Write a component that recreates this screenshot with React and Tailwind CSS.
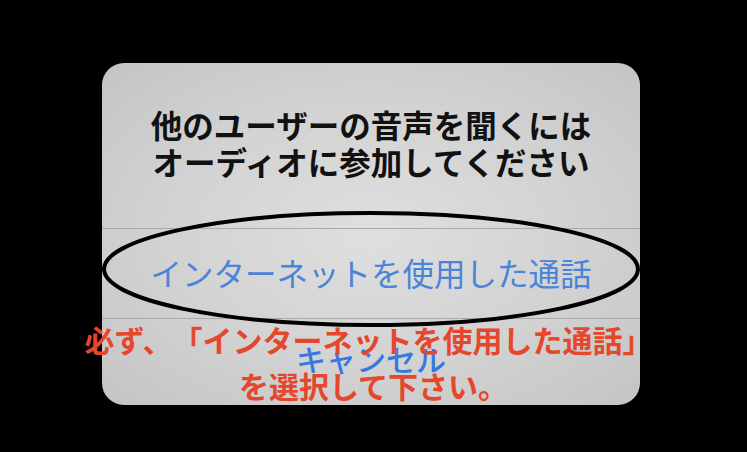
import React from 'react'

const jp = "font-['Noto_Sans_CJK_JP','Noto_Sans',sans-serif]"

const App = () => {
  return (
    <div className={`relative w-[747px] h-[452px] bg-black overflow-hidden [text-spacing-trim:space-all] ${jp}`}>
      <div className="pt-[63px] pl-[102px]">
        <div className="w-[538px] h-[342px] rounded-[22px] overflow-hidden flex flex-col bg-[radial-gradient(ellipse_at_center,#dfdfdf_0%,#d2d2d2_55%,#c4c4c4_100%)]">
          <div className="h-[165px] flex flex-col items-center justify-center pb-[5px] text-[31.5px] leading-[37px] font-bold text-[#111]">
            <div>他のユーザーの音声を聞くには</div>
            <div>オーディオに参加してください</div>
          </div>
          <div className="h-px bg-[#a9a9a9]" />
          <div className="h-[89px] flex items-center justify-center text-[31.5px] text-[#4a84d6] pb-[1px]">
            インターネットを使用した通話
          </div>
          <div className="h-px bg-[#a9a9a9]" />
          <div className="flex-1 flex items-center justify-center text-[30px] font-medium text-[#3777e2] pb-[8px]">
            キャンセル
          </div>
        </div>
      </div>

      <svg className="absolute left-0 top-0" width="747" height="452">
        <ellipse cx="371" cy="269" rx="267" ry="56" fill="none" stroke="#000" strokeWidth="4" />
      </svg>

      <div className="absolute left-0 top-[316px] w-[747px] flex flex-col items-center text-[30px] leading-[46px] font-bold text-[#e5472d]">
        <div className="-ml-[10px]">必ず、「インターネットを使用した通話」</div>
        <div>を選択して下さい。</div>
      </div>
    </div>
  )
}

export default App
